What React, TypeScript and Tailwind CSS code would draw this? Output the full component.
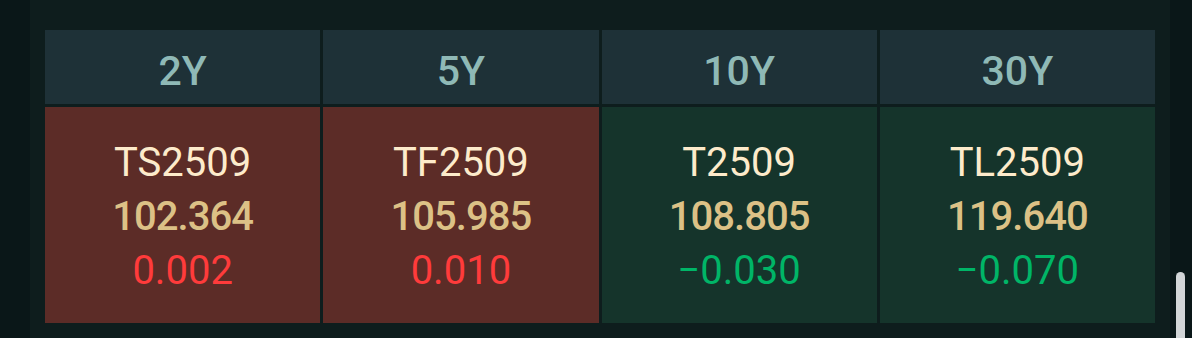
const contracts = [
  { tenor: "2Y", code: "TS2509", price: "102.364", change: "0.002", up: true },
  { tenor: "5Y", code: "TF2509", price: "105.985", change: "0.010", up: true },
  { tenor: "10Y", code: "T2509", price: "108.805", change: "\u22120.030", up: false },
  { tenor: "30Y", code: "TL2509", price: "119.640", change: "\u22120.070", up: false },
];

export default function App() {
  return (
    <div
      className="flex h-[338px] w-[1192px] overflow-hidden bg-[#0a1718]"
      style={{ fontFamily: "Roboto, 'Noto Sans', sans-serif" }}
    >
      <div className="w-[30px] shrink-0 bg-[#0a1718]" />

      {/* Treasury futures panel */}
      <div className="w-[1140px] shrink-0 bg-[#0e1d1d] px-[15px] pt-[30px]">
        <div className="grid grid-cols-4 gap-[3px]">
          {contracts.map((c) => (
            <div
              key={c.tenor}
              className="flex h-[74px] items-center justify-center bg-[#1e3137] pt-[8px] text-[41px] font-medium leading-none text-[#8fb9b6]"
            >
              {c.tenor}
            </div>
          ))}
          {contracts.map((c) => (
            <div
              key={c.code}
              className={
                "flex h-[216px] flex-col items-center justify-center pt-[4px] text-[40px] leading-[54px] " +
                (c.up ? "bg-[#5c2c27]" : "bg-[#15342b]")
              }
            >
              <div className="text-[#fdebcb]">{c.code}</div>
              <div className="font-medium tracking-[-1px] text-[#dcc186]">{c.price}</div>
              <div className={c.up ? "text-[#ff3b3b]" : "text-[#00b567]"}>{c.change}</div>
            </div>
          ))}
        </div>
      </div>

      {/* scrollbar */}
      <div className="flex flex-1 justify-center bg-[#0a1718] pt-[272px]">
        <div className="ml-[-2px] h-[80px] w-[9px] rounded-full bg-[#d2d5d7]" />
      </div>
    </div>
  );
}
